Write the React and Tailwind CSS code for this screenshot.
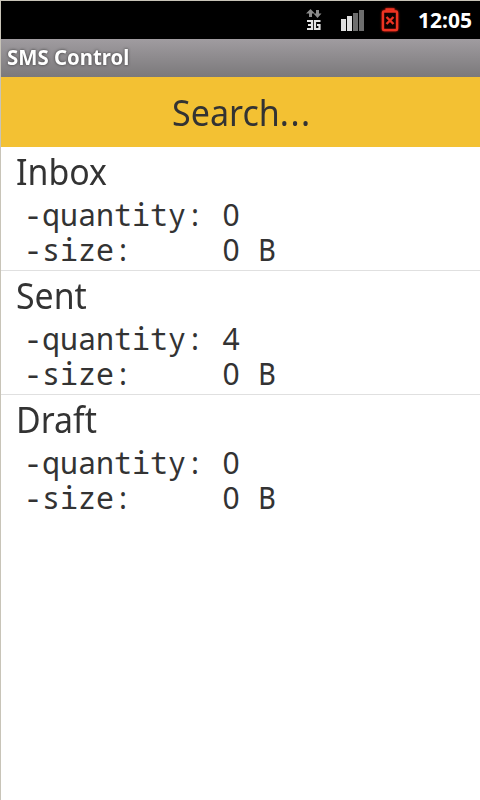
const folders = [
  { name: "Inbox", quantity: 0, size: 0 },
  { name: "Sent", quantity: 4, size: 0 },
  { name: "Draft", quantity: 0, size: 0 },
];

function DataIcon() {
  return (
    <svg className="h-[22px] w-4 shrink-0" viewBox="0 0 16 22">
      <path d="M4.5 0L9 4.5H6V8H3V4.5H0Z" fill="#8c8c8c" />
      <path d="M11.5 9L7.5 4.5H10V1H13V4.5H15.5Z" fill="#8c8c8c" />
      <path d="M1 12H6V20H1M2 16H6M14.5 12H9V20H13.5V16H11" fill="none" stroke="#e4e4e4" strokeWidth="2.2" />
    </svg>
  );
}

function SignalIcon() {
  return (
    <svg className="mt-0.5 h-[22px] w-6 shrink-0" viewBox="0 0 24 22">
      <path d="M0 9H5V21H0ZM6 6H11V21H6Z" fill="#dedede" />
      <path d="M12 3H17V21H12ZM18 0H23V21H18Z" fill="#6e6e6e" />
    </svg>
  );
}

function BatteryIcon() {
  return (
    <svg className="h-6 w-[18px] shrink-0 drop-shadow-[0_0_1px_#e02010]" viewBox="0 0 18 24">
      <path d="M5.5 3V1.3H12.5V3" fill="none" stroke="#ee3322" strokeWidth="2" />
      <rect x="2" y="3.5" width="14" height="18.5" rx="1" fill="#100000" stroke="#ee3322" strokeWidth="2.4" />
      <path d="M5.5 9L12.5 16M12.5 9L5.5 16" stroke="#ee3322" strokeWidth="2.4" />
    </svg>
  );
}

function Detail({ label, value, unit }) {
  return (
    <div className="flex h-[35px] items-baseline font-['Noto_Sans_Mono','DejaVu_Sans_Mono',monospace] text-[30px] leading-[35px]">
      <span className="w-[198px]">{label}</span>
      <span className="w-[18px] text-center font-['Noto_Sans',sans-serif]">{value}</span>
      {unit && <span className="ml-[18px]">{unit}</span>}
    </div>
  );
}

export default function App() {
  return (
    <div className="h-[800px] w-[480px] overflow-hidden border-l border-t border-[#c8c4b8] bg-white font-['Noto_Sans',sans-serif] text-[#333]">
      <div className="flex h-[38px] items-center justify-end bg-black pr-2 text-white">
        <DataIcon />
        <span className="w-[19px]" />
        <SignalIcon />
        <span className="w-4" />
        <BatteryIcon />
        <span className="w-[73px] pt-0.5 text-right text-[21px] font-bold">12:05</span>
      </div>
      <div className="flex h-[38px] items-center bg-gradient-to-b from-[#a09ca0] to-[#7b797b] pl-1.5">
        <span className="origin-left scale-x-[.97] text-[21px] font-bold text-white [text-shadow:0_0_3px_#333]">SMS Control</span>
      </div>
      <div className="flex h-[70px] items-center justify-center bg-[#f3c133] pt-0.5 pl-0.5 text-[36px]">
        <span className="scale-x-[.945]">Search<span className="tracking-[1.6px]">...</span></span>
      </div>
      {folders.map((folder) => (
        <div key={folder.name} className="h-[124px] border-b border-[#e0e0e0] pl-[15px] last:border-b-0">
          <div className="h-[50px] origin-left scale-x-[.94] text-[36px] leading-[50px]">{folder.name}</div>
          <div className="pl-2">
            <Detail label="-quantity:" value={folder.quantity} />
            <Detail label="-size:" value={folder.size} unit="B" />
          </div>
        </div>
      ))}
    </div>
  );
}
